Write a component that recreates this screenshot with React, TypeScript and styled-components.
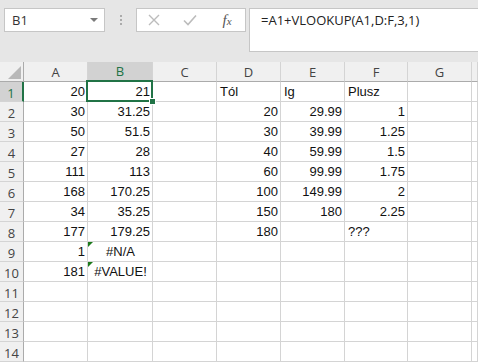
import React from "react";
import styled, { createGlobalStyle } from "styled-components";

const GREEN = "#217346";

const GlobalStyle = createGlobalStyle`
  html, body {
    margin: 0;
    padding: 0;
  }
  body {
    background: #e6e6e6;
    overflow: hidden;
    font-family: "Open Sans", "Noto Sans", sans-serif;
  }
`;

const Window = styled.div`
  width: 478px;
  height: 362px;
  overflow: hidden;
  display: flex;
  flex-direction: column;
`;

const FormulaBar = styled.div`
  height: 62px;
  flex: none;
  display: flex;
  align-items: flex-start;
  padding: 8px 0 0 4px;
  box-sizing: border-box;
  background: #e6e6e6;
`;

const NameBox = styled.div`
  width: 101px;
  height: 24px;
  box-sizing: border-box;
  border: 1px solid #c6c6c6;
  background: #fff;
  display: flex;
  align-items: center;
  justify-content: space-between;
  padding: 0 6px 0 7px;
  font-size: 13px;
  color: #333;
`;

const DropArrow = styled.span`
  width: 0;
  height: 0;
  border-left: 4px solid transparent;
  border-right: 4px solid transparent;
  border-top: 4px solid #7a7a7a;
`;

const Grip = styled.div`
  width: 31px;
  height: 24px;
  display: flex;
  flex-direction: column;
  align-items: center;
  justify-content: center;
  gap: 2px;

  & > span {
    width: 2px;
    height: 2px;
    background: #ababab;
  }
`;

const FxBox = styled.div`
  width: 110px;
  height: 24px;
  box-sizing: border-box;
  border: 1px solid #c6c6c6;
  background: #fff;
  display: grid;
  grid-template-columns: 34px 38px 36px;
  place-items: center;
`;

const Fx = styled.span`
  font-family: "Liberation Serif", serif;
  font-style: italic;
  font-size: 15px;
  color: #555;
  line-height: 1;

  & > small {
    font-size: 11px;
  }
`;

const FormulaInput = styled.div`
  flex: 1;
  margin-left: 3px;
  height: 44px;
  box-sizing: border-box;
  border: 1px solid #c6c6c6;
  border-right: none;
  background: #fff;
  padding: 3px 0 0 11px;
  font-size: 13px;
  line-height: 16px;
  color: #222;
`;

const Sheet = styled.div`
  flex: 1;
  display: grid;
  grid-template-columns: 24px 64px 65px 64px 64px 64px 63px 64px 1fr;
  grid-auto-rows: 20px;
  background: #fff;
`;

const Corner = styled.div`
  background: #f0f0f0;
  border-right: 1px solid #ababab;
  border-bottom: 1px solid #ababab;
  display: flex;
  align-items: flex-end;
  justify-content: flex-end;
  padding: 0 2px 2px 0;

  &::after {
    content: "";
    width: 0;
    height: 0;
    border-left: 13px solid transparent;
    border-bottom: 13px solid #b8b8b8;
  }
`;

const ColHead = styled.div<{ $selected?: boolean }>`
  background: ${(p) => (p.$selected ? "#d2d2d2" : "#f0f0f0")};
  color: ${(p) => (p.$selected ? GREEN : "#444")};
  border-right: 1px solid #d4d4d4;
  border-bottom: ${(p) => (p.$selected ? `2px solid ${GREEN}` : "1px solid #ababab")};
  display: flex;
  align-items: center;
  justify-content: center;
  font-size: 13px;
  line-height: 16px;
`;

const RowHead = styled.div<{ $selected?: boolean }>`
  background: ${(p) => (p.$selected ? "#d2d2d2" : "#f0f0f0")};
  color: ${(p) => (p.$selected ? GREEN : "#444")};
  border-right: ${(p) => (p.$selected ? `2px solid ${GREEN}` : "1px solid #ababab")};
  border-bottom: 1px solid #d4d4d4;
  display: flex;
  align-items: center;
  justify-content: center;
  padding-top: 2px;
  font-size: 13px;
  line-height: 16px;
`;

const Cell = styled.div<{ $align?: "left" | "right" | "center" }>`
  position: relative;
  border-right: 1px solid #d4d4d4;
  border-bottom: 1px solid #d4d4d4;
  display: flex;
  align-items: flex-end;
  justify-content: ${(p) =>
    p.$align === "left" ? "flex-start" : p.$align === "center" ? "center" : "flex-end"};
  padding: 0 2px 1px 3px;
  font-family: "Liberation Sans", Arial, sans-serif;
  font-size: 13px;
  line-height: 16px;
  color: #111;
  white-space: nowrap;
`;

const ActiveCell = styled(Cell)`
  &::after {
    content: "";
    position: absolute;
    top: -2px;
    left: -2px;
    right: -1px;
    bottom: -1px;
    border: 2px solid ${GREEN};
    pointer-events: none;
  }
`;

const FillHandle = styled.span`
  position: absolute;
  right: -4px;
  bottom: -4px;
  width: 5px;
  height: 5px;
  background: ${GREEN};
  border: 1px solid #fff;
  z-index: 2;
`;

const ErrorCell = styled(Cell)`
  &::before {
    content: "";
    position: absolute;
    top: 0;
    left: 0;
    width: 0;
    height: 0;
    border-top: 5px solid #1c7a1c;
    border-right: 5px solid transparent;
  }
`;

type Val = string | number | null;

const rows: Val[][] = [
  [20, 21, null, "Tól", "Ig", "Plusz", null, null],
  [30, 31.25, null, 20, 29.99, 1, null, null],
  [50, 51.5, null, 30, 39.99, 1.25, null, null],
  [27, 28, null, 40, 59.99, 1.5, null, null],
  [111, 113, null, 60, 99.99, 1.75, null, null],
  [168, 170.25, null, 100, 149.99, 2, null, null],
  [34, 35.25, null, 150, 180, 2.25, null, null],
  [177, 179.25, null, 180, null, "???", null, null],
  [1, "#N/A", null, null, null, null, null, null],
  [181, "#VALUE!", null, null, null, null, null, null],
  [null, null, null, null, null, null, null, null],
  [null, null, null, null, null, null, null, null],
  [null, null, null, null, null, null, null, null],
  [null, null, null, null, null, null, null, null],
];

const columns = ["A", "B", "C", "D", "E", "F", "G", ""];

const renderCell = (v: Val, r: number, c: number) => {
  const key = `${r}-${c}`;
  if (r === 0 && c === 1) {
    return (
      <ActiveCell key={key} $align="right">
        {v}
        <FillHandle />
      </ActiveCell>
    );
  }
  if (typeof v === "string" && v.startsWith("#")) {
    return (
      <ErrorCell key={key} $align="center">
        {v}
      </ErrorCell>
    );
  }
  const align = typeof v === "number" ? "right" : "left";
  return (
    <Cell key={key} $align={align}>
      {v}
    </Cell>
  );
};

export default function App() {
  return (
    <Window>
      <GlobalStyle />
      <FormulaBar>
        <NameBox>
          B1
          <DropArrow />
        </NameBox>
        <Grip>
          <span />
          <span />
          <span />
        </Grip>
        <FxBox>
          <svg width="12" height="12" viewBox="0 0 12 12">
            <path d="M1 1L11 11M11 1L1 11" stroke="#bcbcbc" strokeWidth="1.4" />
          </svg>
          <svg width="14" height="12" viewBox="0 0 14 12">
            <path d="M1 6.5L5 10.5L13 1.5" stroke="#bcbcbc" strokeWidth="1.6" fill="none" />
          </svg>
          <Fx>
            f<small>x</small>
          </Fx>
        </FxBox>
        <FormulaInput>=A1+VLOOKUP(A1,D:F,3,1)</FormulaInput>
      </FormulaBar>
      <Sheet>
        <Corner />
        {columns.map((c, i) => (
          <ColHead key={i} $selected={c === "B"}>
            {c}
          </ColHead>
        ))}
        {rows.map((row, r) => (
          <React.Fragment key={r}>
            <RowHead $selected={r === 0}>{r + 1}</RowHead>
            {row.map((v, c) => renderCell(v, r, c))}
          </React.Fragment>
        ))}
      </Sheet>
    </Window>
  );
}
